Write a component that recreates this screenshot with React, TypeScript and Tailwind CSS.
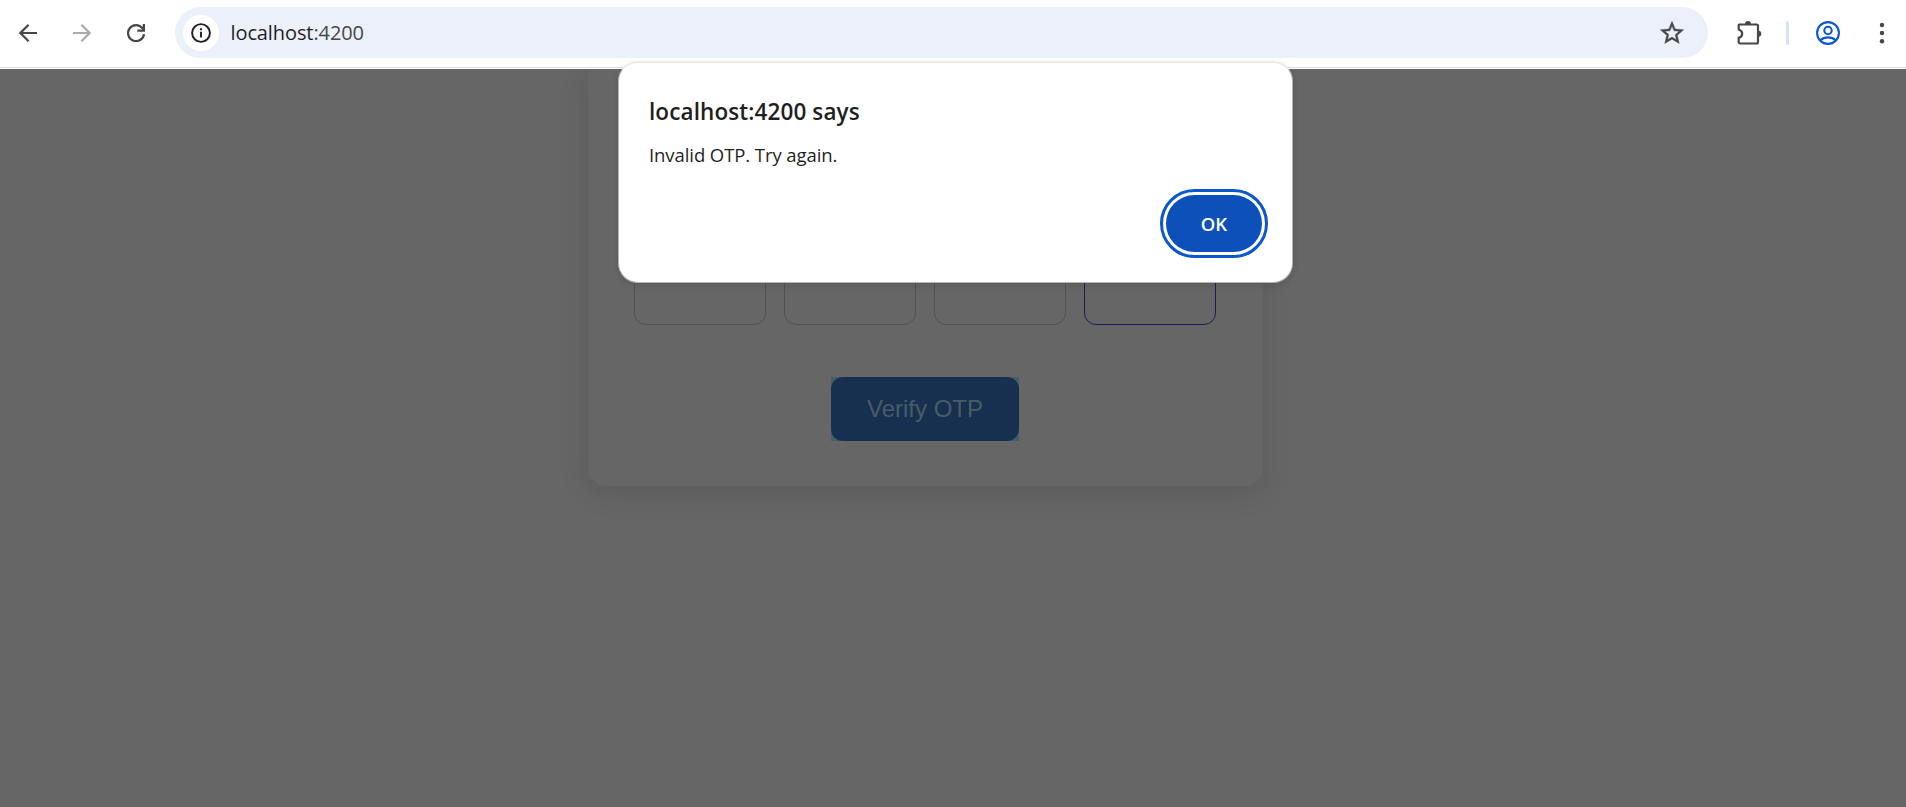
import React from "react";

const uiFont = "font-['Open_Sans','Noto_Sans',sans-serif]";

function BackIcon({ className }: { className: string }) {
  return (
    <svg viewBox="0 0 18 18" className={className} fill="none" stroke="currentColor" strokeWidth="2.2">
      <path d="M18 9H1.6M9.6 .8 1.4 9l8.2 8.2" />
    </svg>
  );
}

function ReloadIcon() {
  return (
    <svg viewBox="0 0 18 18" className="size-[18px] shrink-0" fill="none" stroke="currentColor" strokeWidth="2.2">
      <path d="M17 10.2A8 8 0 1 1 15.4 4.200L16.800 6" />
      <path d="M16.900 0v6.700h-6.600" />
    </svg>
  );
}

function InfoIcon() {
  return (
    <svg viewBox="0 0 20 20" className="size-5" fill="none" stroke="currentColor" strokeWidth="1.9">
      <circle cx="10" cy="10" r="8.9" />
      <path d="M10 8.800v5.700M10 5.200v2" />
    </svg>
  );
}

function StarIcon() {
  return (
    <svg viewBox="0 0 24 24" className="size-7 shrink-0" fill="currentColor" stroke="currentColor" strokeWidth="0.35">
      <path d="m22 9.24-7.19-.62L12 2 9.19 8.63 2 9.24l5.46 4.73L5.82 21 12 17.27 18.18 21l-1.63-7.03L22 9.24zM12 15.4l-3.76 2.27 1-4.28-3.32-2.88 4.38-.38L12 6.1l1.71 4.04 4.38.38-3.32 2.88 1 4.28L12 15.4z" />
    </svg>
  );
}

function ExtensionIcon() {
  return (
    <svg viewBox="0 0 25 25" className="size-[25px] shrink-0" fill="none">
      <path
        d="M2.300 4.500h17.200a1.500 1.500 0 0 1 1.500 1.500v16a1.500 1.500 0 0 1-1.500 1.500H3.100a1.400 1.400 0 0 1-1.400-1.400v-4.200c2-.6 3.500-2 3.500-4.200S3.700 10.200 1.700 9.500V5.200a.7.7 0 0 1 .6-.7z"
        stroke="currentColor"
        strokeWidth="2.200"
      />
      <path d="M8 4a3 3 0 0 1 6 0zM21.300 10.800a3 3 0 0 1 0 6z" fill="currentColor" />
    </svg>
  );
}

function ProfileIcon() {
  return (
    <svg viewBox="0 0 24 24" className="size-6 shrink-0" fill="none" stroke="currentColor" strokeWidth="2.100">
      <circle cx="12" cy="12" r="10.900" />
      <circle cx="12" cy="9.500" r="3.700" />
      <path d="M4.300 19.300c2-1.900 4.700-2.900 7.700-2.900s5.700 1 7.700 2.900" />
    </svg>
  );
}

function MenuIcon() {
  return (
    <svg viewBox="0 0 6 22" className="h-[22px] w-1.5 shrink-0" fill="currentColor">
      <circle cx="3" cy="3" r="2.200" />
      <circle cx="3" cy="11" r="2.200" />
      <circle cx="3" cy="19.300" r="2.200" />
    </svg>
  );
}

function Toolbar() {
  return (
    <header className="h-[69px] bg-white">
      <div className="flex h-[68px] items-center border-b border-[#dfe1e0] pb-[2px] pl-[19px] text-[#474747]">
        <BackIcon className="size-[18px] shrink-0" />
        <BackIcon className="ml-9 size-[18px] shrink-0 rotate-180 text-[#ababab]" />
        <div className="ml-9">
          <ReloadIcon />
        </div>
        <div className="ml-[30px] flex h-[51px] w-[1533px] shrink-0 items-center rounded-full bg-[#ecf0fa] pr-[22px] pl-[7.500px]">
          <div className="flex size-9 items-center justify-center rounded-full bg-white text-[#1f1f1f]">
            <InfoIcon />
          </div>
          <div className={`${uiFont} ml-3 flex-1 text-[20px] leading-7 tracking-[-0.1px] text-[#1f1f1f]`}>
            localhost<span className="text-[#474747]">:4200</span>
          </div>
          <StarIcon />
        </div>
        <div className="ml-[29px] flex items-center">
          <ExtensionIcon />
          <div className="ml-6 h-6 w-[3px] rounded-full bg-[#d3e3fd]" />
          <div className="ml-[27px] text-[#0b57d0]">
            <ProfileIcon />
          </div>
          <div className="ml-[39px]">
            <MenuIcon />
          </div>
        </div>
      </div>
    </header>
  );
}

function OtpCard() {
  return (
    <section className="mr-[55px] flex h-[417px] w-[675px] flex-col items-center rounded-b-[18px] bg-[#666666] px-[46px] pt-[180px] shadow-[0_6px_30px_rgba(0,0,0,0.12)]">
      <div className="flex w-full gap-[18px]">
        <div className="h-[76px] w-[132px] rounded-xl border border-[#525252]" />
        <div className="h-[76px] w-[132px] rounded-xl border border-[#525252]" />
        <div className="h-[76px] w-[132px] rounded-xl border border-[#525252]" />
        <div className="h-[76px] w-[132px] rounded-xl border border-[#1b1f4b]" />
      </div>
      <div className="mt-[52px] mr-px bg-[#465c69]">
        <button className="block h-16 w-[188px] rounded-xl bg-[#18304f] font-['Liberation_Sans',Arial,sans-serif] text-[24px] text-[#465d68]">
          Verify OTP
        </button>
      </div>
    </section>
  );
}

function AlertDialog() {
  return (
    <div
      role="alertdialog"
      className={`${uiFont} absolute top-[61px] left-[618px] flex h-[222px] w-[675px] flex-col rounded-[20px] border border-t-2 border-[#b4b6b5] border-t-[#ebebeb] bg-white pt-[34px] pr-[30px] pl-[30px] text-[#1f1f1f] shadow-[0_2px_6px_rgba(0,0,0,0.12)]`}
    >
      <h1 className="text-[22.5px] leading-[30px] font-semibold tracking-[0.1px]">localhost:4200 says</h1>
      <p className="mt-4 text-[18.5px] leading-6 tracking-[-0.08px]">Invalid OTP. Try again.</p>
      <button className="mt-[28px] flex h-[57px] w-24 items-center justify-center self-end rounded-full bg-[#0d50b9] text-[18.5px] font-semibold text-white outline-3 outline-offset-3 outline-[#0b57d0]">
        OK
      </button>
    </div>
  );
}

export default function App() {
  return (
    <div className="relative h-[807px] w-[1906px] overflow-hidden bg-[#666666]">
      <Toolbar />
      <main className="flex h-[738px] items-start justify-center overflow-hidden">
        <OtpCard />
      </main>
      <AlertDialog />
    </div>
  );
}
